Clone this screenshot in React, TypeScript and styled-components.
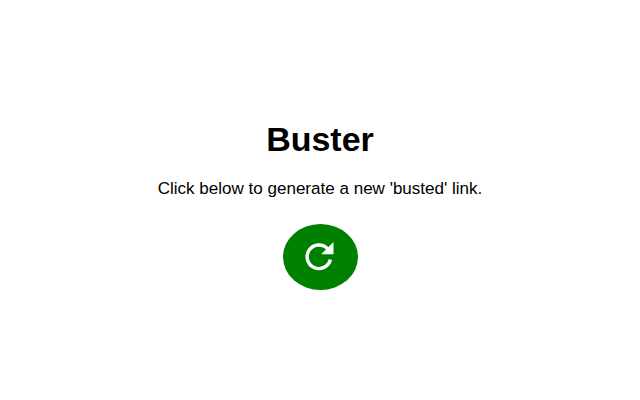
import React from "react";
import styled, { createGlobalStyle } from "styled-components";

const Global = createGlobalStyle`
  html, body { margin: 0; padding: 0; background: #fff; }
  #root { height: 400px; }
`;

const Page = styled.main`
  width: 640px;
  height: 400px;
  display: flex;
  flex-direction: column;
  align-items: center;
  padding-top: 119px;
  box-sizing: border-box;
  font-family: "Liberation Sans", Arial, sans-serif;
  color: #000;
`;

const Title = styled.h1`
  margin: 0;
  font-size: 34px;
  line-height: 40px;
  font-weight: 700;
`;

const Message = styled.p`
  margin: 20px 0 0;
  font-size: 17.05px;
  line-height: 20px;
`;

const RefreshButton = styled.button`
  margin-top: 25px;
  width: 75px;
  height: 66px;
  border: none;
  border-radius: 50%;
  background: #008000;
  padding: 0 0 2px;
  display: flex;
  align-items: center;
  justify-content: center;
  cursor: pointer;
`;

export default function App() {
  return (
    <Page>
      <Global />
      <Title>Buster</Title>
      <Message>Click below to generate a new 'busted' link.</Message>
      <RefreshButton aria-label="Refresh">
        <svg width="32" height="32" viewBox="0 0 32 32" fill="none">
          <path d="M23.6 8.8A11.8 11.8 0 1 0 26.4 19.5" stroke="#fff" strokeWidth="3.4" />
          <path d="M29.5 2V14.2H17.2z" fill="#fff" />
        </svg>
      </RefreshButton>
    </Page>
  );
}
